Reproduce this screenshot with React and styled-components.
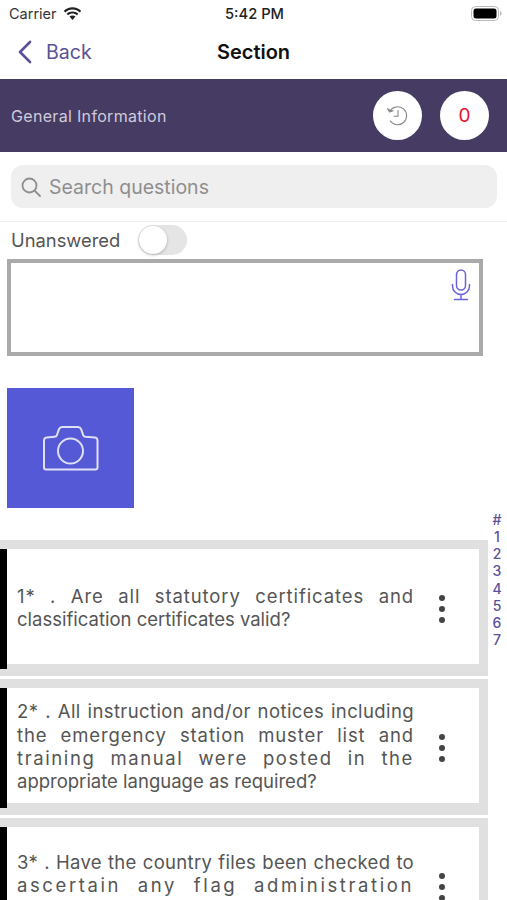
import React from "react";
import styled, { createGlobalStyle } from "styled-components";

const GlobalStyle = createGlobalStyle`
  html, body {
    margin: 0;
    padding: 0;
    background: #fff;
    font-family: Inter, "Liberation Sans", sans-serif;
  }
`;

const Page = styled.div`
  position: relative;
  width: 507px;
  height: 900px;
  overflow: hidden;
  background: #fff;
`;

const StatusBar = styled.div`
  height: 27px;
  display: grid;
  grid-template-columns: 1fr auto 1fr;
  align-items: center;
  padding: 0 5px 0 9px;
  font-size: 14.5px;
  color: #333;
`;

const Carrier = styled.div`
  display: flex;
  align-items: center;
  gap: 6px;
`;

const Clock = styled.div`
  font-weight: 500;
  font-size: 14.7px;
  color: #222;
  margin-right: 2px;
`;

const BatteryWrap = styled.div`
  display: flex;
  justify-content: flex-end;
`;

const NavBar = styled.div`
  box-sizing: border-box;
  height: 52px;
  padding-bottom: 2px;
  position: relative;
  display: flex;
  align-items: center;
  justify-content: center;
`;

const BackLink = styled.div`
  position: absolute;
  left: 17px;
  top: 13px;
  display: flex;
  align-items: center;
  gap: 14px;
  font-size: 19.6px;
  color: #5a5196;
`;

const NavTitle = styled.div`
  font-size: 20px;
  font-weight: 600;
  color: #111;
`;

const SectionBand = styled.div`
  height: 73px;
  background: #453b63;
  display: flex;
  align-items: center;
  justify-content: space-between;
  padding: 0 18px 0 11px;
`;

const SectionName = styled.div`
  font-size: 16px;
  letter-spacing: 0.32px;
  color: #cfcbdc;
`;

const BandActions = styled.div`
  display: flex;
  gap: 18px;
`;

const RoundButton = styled.div`
  width: 49px;
  height: 49px;
  border-radius: 50%;
  background: #fff;
  display: flex;
  align-items: center;
  justify-content: center;
  color: #e8112d;
  font-size: 19px;
`;

const SearchWrap = styled.div`
  padding: 13px 10px 13px 11px;
  border-bottom: 1px solid #eee;
`;

const SearchBox = styled.div`
  height: 43px;
  border-radius: 12px;
  background: #efefef;
  display: flex;
  align-items: center;
  gap: 7px;
  padding-left: 9px;
  font-size: 19.5px;
  color: #8e8e8e;
`;

const FilterRow = styled.div`
  height: 36px;
  display: flex;
  align-items: center;
  gap: 18px;
  padding-left: 11px;
  font-size: 18.35px;
  color: #555;
`;

const Toggle = styled.div`
  width: 49px;
  height: 30px;
  border-radius: 15px;
  background: #e5e5e5;
  position: relative;
`;

const ToggleKnob = styled.div`
  position: absolute;
  left: 1px;
  top: 1px;
  width: 28px;
  height: 28px;
  border-radius: 50%;
  background: #fff;
  box-shadow: 0 1px 3px rgba(0, 0, 0, 0.25);
`;

const NoteBox = styled.div`
  box-sizing: border-box;
  margin: 1px 0 0 7px;
  width: 476px;
  height: 97px;
  border: 4px solid #aaa;
  position: relative;
`;

const MicButton = styled.div`
  position: absolute;
  right: 8px;
  top: 6px;
  line-height: 0;
`;

const CameraTile = styled.div`
  margin: 32px 0 0 7px;
  width: 127px;
  height: 120px;
  background: #5659d6;
  display: flex;
  align-items: center;
  justify-content: center;
`;

const QuestionList = styled.div`
  margin-top: 32px;
  width: 488px;
  display: flex;
  flex-direction: column;
  gap: 3px;
`;

const Card = styled.div`
  background: #e0e0e0;
  padding: 9px 9px 12px 0;
  display: flex;
`;

const BlackBar = styled.div`
  width: 7px;
  background: #000;
  margin-bottom: -5px;
  flex-shrink: 0;
`;

const CardBody = styled.div`
  flex: 1;
  height: 115px;
  background: #fff;
  display: flex;
  align-items: center;
  padding: 3px 0 0 10px;
  box-sizing: border-box;
`;

const QuestionText = styled.div`
  width: 397px;
  font-size: 18.5px;
  line-height: 23.3px;
  color: #555;
`;

const QuestionLine = styled.div`
  text-align: ${(p) => (p.$last ? "left" : "justify")};
  text-align-last: ${(p) => (p.$last ? "left" : "justify")};
  letter-spacing: ${(p) => p.$spacing || 0}px;
`;

const MoreDots = styled.div`
  margin: 2px 0 0 25px;
  display: flex;
  flex-direction: column;
  gap: 5px;
`;

const Dot = styled.div`
  width: 6px;
  height: 6px;
  border-radius: 50%;
  background: #444;
`;

const SideIndex = styled.div`
  position: absolute;
  right: 3px;
  top: 511px;
  width: 14px;
  display: flex;
  flex-direction: column;
  align-items: center;
  font-size: 14px;
  line-height: 17.15px;
  font-weight: 500;
  color: #5a5196;
`;

const questions = [
  {
    lines: [
      { text: "1* . Are all statutory certificates and", spacing: 0.9 },
      { text: "classification certificates valid?", last: true },
    ],
  },
  {
    lines: [
      { text: "2* . All instruction and/or notices including", spacing: 0.4 },
      { text: "the emergency station muster list and", spacing: 0.9 },
      { text: "training manual were posted in the", spacing: 1.6 },
      { text: "appropriate language as required?", last: true },
    ],
  },
  {
    // the rest of this question is below the fold, the empty line keeps it centred
    lines: [
      { text: "3* . Have the country files been checked to", spacing: 0.3 },
      { text: "ascertain any flag administration", spacing: 2.6 },
      { text: "\u00a0", last: true },
    ],
  },
];

const Wifi = () => (
  <svg width="19" height="14" viewBox="0 0 19 14" fill="#222">
    <path d="M9.5 2.6c2.8 0 5.3 1.1 7.2 2.9l1.5-1.6C15.9 1.7 12.9.3 9.5.3S3.1 1.7.8 3.9l1.5 1.6c1.9-1.8 4.4-2.9 7.2-2.9z" />
    <path d="M9.5 6.6c1.7 0 3.2.7 4.4 1.7l1.5-1.6C13.8 5.3 11.8 4.4 9.5 4.4s-4.3.9-5.9 2.3l1.5 1.6c1.2-1 2.7-1.7 4.4-1.7z" />
    <path d="M9.5 8.5c-1.2 0-2.2.4-3 1.1l3 3.4 3-3.4c-.8-.7-1.8-1.1-3-1.1z" />
  </svg>
);

const Battery = () => (
  <svg width="31" height="15" viewBox="0 0 31 15">
    <rect x="0.5" y="0.5" width="27" height="14" rx="4" fill="none" stroke="#bbb" />
    <rect x="2.5" y="2.5" width="23" height="10" rx="2.5" fill="#000" />
    <path d="M29 5v5c1-.3 1.6-1.4 1.6-2.5S30 5.3 29 5z" fill="#bbb" />
  </svg>
);

const BackChevron = () => (
  <svg width="15" height="24" viewBox="0 0 15 24" fill="none" stroke="#5a5196" strokeWidth="2.6" strokeLinecap="round" strokeLinejoin="round">
    <path d="M13 2 3 12l10 10" />
  </svg>
);

const HistoryIcon = () => (
  <svg width="23" height="23" viewBox="0 0 23 23" fill="none" stroke="#888" strokeWidth="1.1" strokeLinecap="round" strokeLinejoin="round">
    <path d="M3.8 7.3A9 9 0 1 1 4.3 17" />
    <path d="M1.5 4.5l2 3.6 3.7-1.3" fill="#888" />
    <path d="M12 6.5v5.8H8" />
  </svg>
);

const SearchIcon = () => (
  <svg width="22" height="22" viewBox="0 0 22 22" fill="none" stroke="#8e8e8e" strokeWidth="1.8" strokeLinecap="round">
    <circle cx="9.5" cy="9.5" r="7" />
    <path d="m14.8 14.8 5.2 5.2" />
  </svg>
);

const MicIcon = () => (
  <svg width="20" height="32" viewBox="0 0 20 32" fill="none" stroke="#6a63d8" strokeWidth="1.5" strokeLinecap="round">
    <rect x="5.5" y="1" width="9" height="20" rx="4.5" />
    <path d="M1.5 15.5v1.5a8.5 8.5 0 0 0 17 0v-1.5" />
    <path d="M10 25.5V30" />
    <path d="M3.5 30.5h13" />
  </svg>
);

const CameraIcon = () => (
  <svg width="56" height="46" viewBox="0 0 56 46" fill="none" stroke="#dfe0f8" strokeWidth="2" strokeLinejoin="round">
    <path d="M3.5 44.5h49c1.2 0 2-.9 2-2V15.5c0-1.8-1-3-2.8-3.1l-9.2-.7c-1-.1-1.8-.6-2.3-1.5l-2.1-6c-.5-1.2-1.5-2.2-3-2.2H19c-1.5 0-2.5 1-3 2.2l-2.1 6c-.5.9-1.3 1.4-2.3 1.5l-7.8.7c-1.8.1-2.8 1.3-2.8 3.1v27c0 1.1.8 2 2 2z" />
    <circle cx="27.5" cy="26" r="12.5" />
  </svg>
);

const App = () => {
  return (
    <Page>
      <GlobalStyle />
      <StatusBar>
        <Carrier>
          Carrier <Wifi />
        </Carrier>
        <Clock>5:42 PM</Clock>
        <BatteryWrap>
          <Battery />
        </BatteryWrap>
      </StatusBar>

      <NavBar>
        <BackLink>
          <BackChevron />
          Back
        </BackLink>
        <NavTitle>Section</NavTitle>
      </NavBar>

      <SectionBand>
        <SectionName>General Information</SectionName>
        <BandActions>
          <RoundButton>
            <HistoryIcon />
          </RoundButton>
          <RoundButton>0</RoundButton>
        </BandActions>
      </SectionBand>

      <SearchWrap>
        <SearchBox>
          <SearchIcon />
          Search questions
        </SearchBox>
      </SearchWrap>

      <FilterRow>
        Unanswered
        <Toggle>
          <ToggleKnob />
        </Toggle>
      </FilterRow>

      <NoteBox>
        <MicButton>
          <MicIcon />
        </MicButton>
      </NoteBox>

      <CameraTile>
        <CameraIcon />
      </CameraTile>

      <QuestionList>
        {questions.map((q) => (
          <Card key={q.lines[0].text}>
            <BlackBar />
            <CardBody>
              <QuestionText>
                {q.lines.map((line) => (
                  <QuestionLine key={line.text} $last={line.last} $spacing={line.spacing}>
                    {line.text}
                  </QuestionLine>
                ))}
              </QuestionText>
              <MoreDots>
                <Dot />
                <Dot />
                <Dot />
              </MoreDots>
            </CardBody>
          </Card>
        ))}
      </QuestionList>

      <SideIndex>
        {["#", "1", "2", "3", "4", "5", "6", "7"].map((c) => (
          <span key={c}>{c}</span>
        ))}
      </SideIndex>
    </Page>
  );
};

export default App;
